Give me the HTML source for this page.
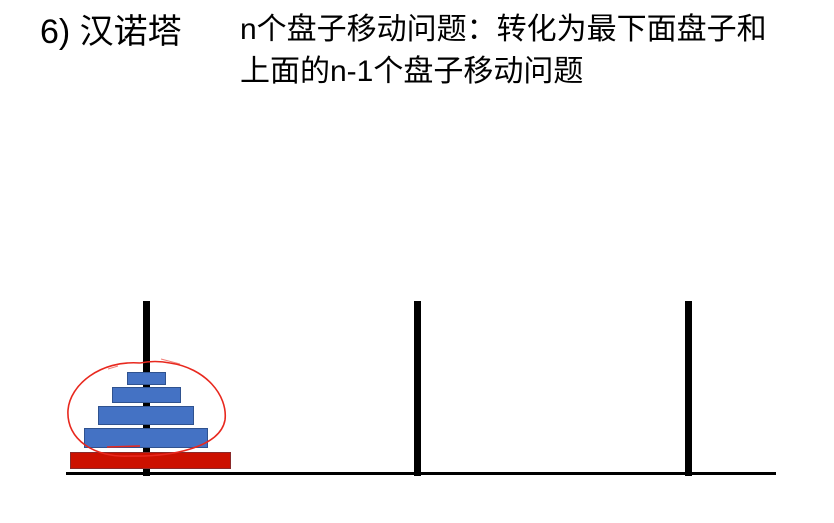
<!DOCTYPE html>
<html><head><meta charset="utf-8"><style>
body{margin:0;width:834px;height:523px;background:#fff;position:relative;overflow:hidden;font-family:"Liberation Sans","Noto Sans CJK SC",sans-serif;color:#000}
.t{position:absolute;white-space:nowrap}
.d{position:absolute;background:#4472c4;border:1px solid #2f528f;box-sizing:border-box}
.p{position:absolute;background:#000;width:7px;top:301px;height:175px}
</style></head><body>
<div class="t" style="left:40px;top:11px;font-size:34px;line-height:42px">6) 汉诺塔</div>
<div class="t" style="left:240px;top:9px;font-size:30px;line-height:42px">n个盘子移动问题：转化为最下面盘子和<br>上面的n-1个盘子移动问题</div>
<div style="position:absolute;left:66px;top:472px;width:710px;height:3px;background:#000"></div>
<div class="p" style="left:143px"></div>
<div class="p" style="left:414px"></div>
<div class="p" style="left:685px"></div>
<div class="d" style="left:127px;top:372px;width:39px;height:13px"></div>
<div class="d" style="left:112px;top:387px;width:69px;height:16px"></div>
<div class="d" style="left:98px;top:406px;width:96px;height:19px"></div>
<div class="d" style="left:84px;top:428px;width:124px;height:20px"></div>
<div class="d" style="left:70px;top:452px;width:161px;height:17px;background:#cc1100;border-color:#8a2a2a"></div>
<svg style="position:absolute;left:0;top:0" width="834" height="523">
<path d="M140 363 C100 360 70 385 68 410 C66 440 95 458 130 456 C170 457 220 448 225 420 C228 395 205 368 170 363 C155 360 145 362 140 363" fill="none" stroke="#e8281e" stroke-width="1.6"/>
<path d="M107 447 L140 446" fill="none" stroke="#e8281e" stroke-width="1.6"/>
<path d="M161 359 L180 364" fill="none" stroke="#e8281e" stroke-width="1" opacity=".6"/>
<path d="M108 369 L118 366" fill="none" stroke="#e8281e" stroke-width="1" opacity=".6"/>
</svg>
</body></html>
